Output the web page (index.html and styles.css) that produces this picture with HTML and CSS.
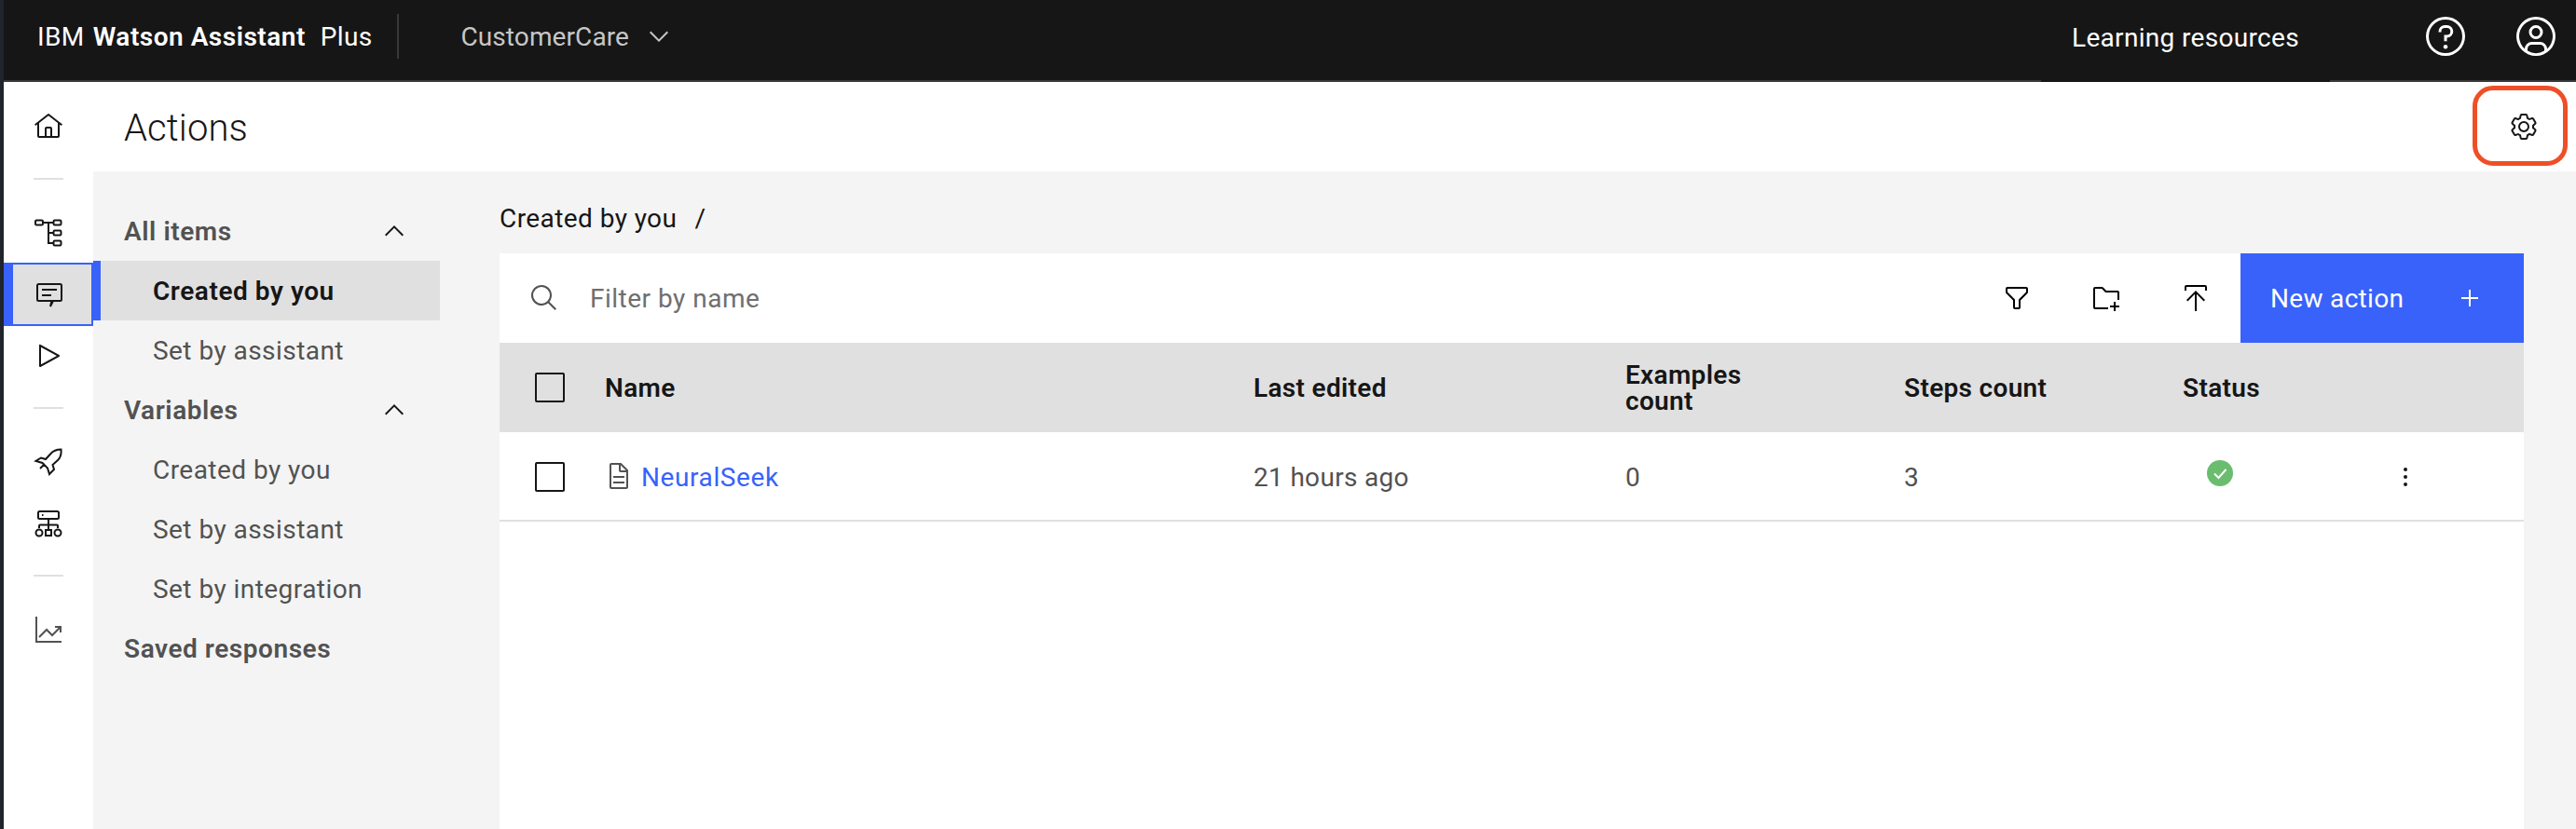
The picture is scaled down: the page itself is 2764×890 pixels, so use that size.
FILE: index.html
```html
<!DOCTYPE html>
<html lang="en">
<head>
<meta charset="utf-8">
<title>Actions</title>
<link rel="stylesheet" href="styles.css">
</head>
<body>
<div class="strip"></div>
<div class="app">
  <header class="topbar">
    <div class="brand"><span>IBM</span> <b>Watson Assistant</b></div>
    <div class="plan">Plus</div>
    <div class="workspace">CustomerCare
      <svg class="i32" viewBox="0 0 32 32"><path fill="#c6c6c6" d="M16 22L6 12l1.4-1.4 8.6 8.6 8.6-8.6L26 12z"/></svg>
    </div>
    <div class="learn">Learning resources</div>
    <svg class="i48" viewBox="0 0 32 32"><path d="M16,2A14,14,0,1,0,30,16,14,14,0,0,0,16,2Zm0,26A12,12,0,1,1,28,16,12,12,0,0,1,16,28Z"/><circle cx="16" cy="23.5" r="1.5"/><path d="M17,8H15.5A4.49,4.49,0,0,0,11,12.5V13h2v-.5A2.5,2.5,0,0,1,15.5,10H17a2.5,2.5,0,0,1,0,5H15v4.5h2V17a4.5,4.5,0,0,0,0-9Z"/></svg>
    <svg class="i48 user" viewBox="0 0 32 32"><path d="M16,8a5,5,0,1,0,5,5A5,5,0,0,0,16,8Zm0,8a3,3,0,1,1,3-3A3.0034,3.0034,0,0,1,16,16Z"/><path d="M16,2A14,14,0,1,0,30,16,14.0158,14.0158,0,0,0,16,2ZM10,26.3765V25a3.0033,3.0033,0,0,1,3-3h6a3.0033,3.0033,0,0,1,3,3v1.3765a11.8989,11.8989,0,0,1-12,0Zm13.9925-1.4507A5.0016,5.0016,0,0,0,19,20H13a5.0016,5.0016,0,0,0-4.9925,4.9258,12,12,0,1,1,15.985,0Z"/></svg>
  </header>
  <div class="body">
    <nav class="rail">
      <div class="rail-item"><svg class="i32" viewBox="0 0 32 32"><path fill="#161616" d="M16.6123,2.2138a1.01,1.01,0,0,0-1.2427,0L1,13.4194l1.2427,1.5717L4,13.6209V26a2.0041,2.0041,0,0,0,2,2H26a2.0037,2.0037,0,0,0,2-2V13.63L29.7573,15,31,13.4282ZM18,26H14V18h4Zm2,0V18a2.0023,2.0023,0,0,0-2-2H14a2.002,2.002,0,0,0-2,2v8H6V12.0615l10-7.79,10,7.8005V26Z"/></svg></div>
      <div class="rail-sep"></div>
      <div class="rail-item"><svg class="i32 line" viewBox="0 0 32 32"><rect x="2" y="2.5" width="8" height="5" rx="1.2"/><rect x="21.5" y="2.5" width="8" height="5" rx="1.2"/><rect x="21.5" y="13.5" width="8" height="5" rx="1.2"/><rect x="21.5" y="24.5" width="8" height="5" rx="1.2"/><path d="M10 5H21.5M16 5V27H21.5M16 16H21.5"/></svg></div>
      <div class="rail-item active"><svg class="i32 line" viewBox="0 0 32 32"><path d="M4.5 5H27.500A1.500 1.500 0 0 1 29 6.500V21.500A1.500 1.500 0 0 1 27.500 23H20L17 29L18.500 23H4.500A1.500 1.500 0 0 1 3 21.500V6.500A1.500 1.500 0 0 1 4.500 5ZM8 11H24M8 17H18"/></svg></div>
      <div class="rail-item"><svg class="i32" viewBox="0 0 32 32"><path fill="#161616" d="M7,28a1,1,0,0,1-1-1V5a1,1,0,0,1,1.4819-.8763l20,11a1,1,0,0,1,0,1.7525l-20,11A1.0005,1.0005,0,0,1,7,28ZM8,6.6909V25.3088L24.9248,16Z"/></svg></div>
      <div class="rail-sep"></div>
      <div class="rail-item"><svg class="i32 line" viewBox="0 0 32 32"><path d="M29.500 2.500C24 2.500 20.500 4.500 18 7.500L13 13L8 11.500L2.500 15L9.500 17L15 22.500L17 29L22 24L20.500 19L26 14C29 11 30 7 29.500 2.500ZM7 23L12 18"/></svg></div>
      <div class="rail-item second"><svg class="i32 line" viewBox="0 0 32 32"><rect x="5" y="3" width="22" height="8" rx="1.500"/><path d="M16 11V22M6 21V18.500A1 1 0 0 1 7 17.500H25A1 1 0 0 1 26 18.500V21"/><circle cx="6" cy="26" r="3.500"/><rect x="13" y="23" width="6" height="6"/><circle cx="26" cy="26" r="3.500"/><path d="M9 7H10.500"/></svg></div>
      <div class="rail-sep"></div>
      <div class="rail-item"><svg class="i32 line muted" viewBox="0 0 32 32"><path d="M3 2V29H30M6 24L14 16L20 22L29 13M23 13H29V19"/></svg></div>
    </nav>
    <div class="main">
      <div class="titlebar">
        <h1>Actions</h1>
        <svg class="i32 gear" viewBox="0 0 32 32"><path fill="#161616" d="M27,16.76c0-.25,0-.5,0-.76s0-.51,0-.77l1.92-1.68A2,2,0,0,0,29.3,11L26.94,7a2,2,0,0,0-1.73-1,2,2,0,0,0-.64.1l-2.43.82a11.35,11.35,0,0,0-1.31-.75l-.51-2.52a2,2,0,0,0-2-1.61H13.64a2,2,0,0,0-2,1.61l-.51,2.52a11.48,11.48,0,0,0-1.32.75L7.43,6.06A2,2,0,0,0,6.79,6,2,2,0,0,0,5.06,7L2.7,11a2,2,0,0,0,.41,2.51L5,15.24c0,.25,0,.5,0,.76s0,.51,0,.77L3.11,18.45A2,2,0,0,0,2.7,21L5.06,25a2,2,0,0,0,1.73,1,2,2,0,0,0,.64-.1l2.43-.82a11.35,11.35,0,0,0,1.31.75l.51,2.52a2,2,0,0,0,2,1.61h4.72a2,2,0,0,0,2-1.61l.51-2.52a11.48,11.48,0,0,0,1.32-.75l2.42.82a2,2,0,0,0,.64.1,2,2,0,0,0,1.73-1L29.3,21a2,2,0,0,0-.41-2.51ZM25.21,24l-3.43-1.16a8.86,8.86,0,0,1-2.71,1.57L18.36,28H13.64l-.71-3.55a9.36,9.36,0,0,1-2.7-1.57L6.79,24,4.43,20l2.72-2.4a8.9,8.9,0,0,1,0-3.13L4.43,12,6.79,8l3.43,1.16a8.86,8.86,0,0,1,2.71-1.57L13.64,4h4.72l.71,3.55a9.36,9.36,0,0,1,2.7,1.57L25.21,8,27.57,12l-2.72,2.4a8.9,8.9,0,0,1,0,3.13L27.57,20Z"/><path fill="#161616" d="M16,22a6,6,0,1,1,6-6A5.94,5.94,0,0,1,16,22Zm0-10a3.91,3.91,0,0,0-4,4,3.91,3.91,0,0,0,4,4,3.91,3.91,0,0,0,4-4A3.91,3.91,0,0,0,16,12Z"/></svg>
      </div>
      <div class="content">
        <aside class="sidenav">
          <div class="nav-head">All items<svg class="i32" viewBox="0 0 32 32"><path d="M16 10L26 20 24.6 21.4 16 12.8 7.4 21.4 6 20 16 10z"/></svg></div>
          <div class="nav-sub current">Created by you</div>
          <div class="nav-sub">Set by assistant</div>
          <div class="nav-head">Variables<svg class="i32" viewBox="0 0 32 32"><path d="M16 10L26 20 24.6 21.4 16 12.8 7.4 21.4 6 20 16 10z"/></svg></div>
          <div class="nav-sub">Created by you</div>
          <div class="nav-sub">Set by assistant</div>
          <div class="nav-sub">Set by integration</div>
          <div class="nav-head">Saved responses</div>
        </aside>
        <section class="panel">
          <div class="crumb"><span>Created by you</span><span>/</span></div>
          <div class="card">
            <div class="toolbar">
              <svg class="i32 search" viewBox="0 0 32 32"><path d="M29,27.5859l-7.5521-7.5521a11.0177,11.0177,0,1,0-1.4141,1.4141L27.5859,29ZM4,13a9,9,0,1,1,9,9A9.01,9.01,0,0,1,4,13Z"/></svg>
              <div class="filter">Filter by name</div>
              <div class="tool"><svg class="i32" viewBox="0 0 32 32"><path d="M18,28H14a2,2,0,0,1-2-2V18.41L4.59,11A2,2,0,0,1,4,9.59V6A2,2,0,0,1,6,4H26a2,2,0,0,1,2,2V9.59A2,2,0,0,1,27.41,11L20,18.41V26A2,2,0,0,1,18,28ZM6,6V9.59l8,8V26h4V17.59l8-8V6Z"/></svg></div>
              <div class="tool"><svg class="i32" viewBox="0 0 32 32"><path d="M26 20L24 20 24 24 20 24 20 26 24 26 24 30 26 30 26 26 30 26 30 24 26 24 26 20z"/><path d="M28,8H16L12.59,4.59A2,2,0,0,0,11.17,4H4A2,2,0,0,0,2,6V26a2,2,0,0,0,2,2H18V26H4V6h7.17l3.41,3.41L15.17,10H28v8h2V10A2,2,0,0,0,28,8Z"/></svg></div>
              <div class="tool"><svg class="i32" viewBox="0 0 32 32"><path d="M6 18L7.41 19.41 15 11.83 15 30 17 30 17 11.83 24.59 19.41 26 18 16 8 6 18z"/><path d="M6,8V4H26V8h2V4a2,2,0,0,0-2-2H6A2,2,0,0,0,4,4V8Z"/></svg></div>
              <div class="new-action"><span>New action</span><svg class="i32" viewBox="0 0 32 32"><path fill="#fff" d="M17 15V7H15V15H7V17H15V25H17V17H25V15Z"/></svg></div>
            </div>
            <div class="grid head">
              <div class="check-cell"><span class="check"></span></div>
              <div class="t">Name</div>
              <div class="t">Last edited</div>
              <div class="t wrap">Examples count</div>
              <div class="t">Steps count</div>
              <div class="t">Status</div>
              <div></div>
            </div>
            <div class="grid row">
              <div class="check-cell"><span class="check"></span></div>
              <div class="name-cell"><svg class="i32 doc" viewBox="0 0 32 32"><path d="M25.7,9.3l-7-7C18.5,2.1,18.3,2,18,2H8C6.9,2,6,2.9,6,4v24c0,1.1,0.9,2,2,2h16c1.1,0,2-0.9,2-2V10C26,9.7,25.9,9.5,25.7,9.3z M18,4.400l5.600,5.600H18V4.400z M24,28H8V4h8v6c0,1.100,0.900,2,2,2h6V28z"/><path d="M10 22H22V24H10z M10 16H22V18H10z"/></svg><span class="link">NeuralSeek</span></div>
              <div>21 hours ago</div>
              <div>0</div>
              <div>3</div>
              <div><svg class="status" viewBox="0 0 28 28"><circle cx="14" cy="14" r="14" fill="#6abd6e"/><path d="M8 14.500L12.500 19L20.500 10" fill="none" stroke="#fff" stroke-width="2"/></svg></div>
              <div class="kebab"><i></i><i></i><i></i></div>
            </div>
          </div>
        </section>
      </div>
    </div>
  </div>
</div>
<div class="callout"></div>
</body>
</html>
```
FILE: styles.css
```css
* { box-sizing: border-box; }
html, body { margin: 0; height: 890px; overflow: hidden; }
body {
  display: flex;
  position: relative;
  background: #fff;
  font-family: "Roboto", "Liberation Sans", sans-serif;
  font-size: 28px;
  letter-spacing: 0.32px;
  color: #161616;
}
.strip { width: 4px; background: #20242c; flex: none; }
.app { flex: 1; display: flex; flex-direction: column; min-width: 0; }
.i32 { width: 32px; height: 32px; flex: none; display: block; }
.i48 { width: 48px; height: 48px; flex: none; display: block; fill: #fff; margin-bottom: 8px; }
.user { margin-left: 49px; margin-right: 19px; }

.topbar {
  height: 88px; flex: none; display: flex; align-items: center;
  background: #161616; color: #fff; border-bottom: 2px solid #393939;
}
.brand { margin-left: 36px; margin-bottom: 8px; white-space: nowrap; }
.brand b { font-weight: 600; letter-spacing: 0.5px; margin-left: 2px; }
.plan { margin-left: 16px; margin-bottom: 8px; }
.workspace {
  margin-left: 27px; margin-bottom: 8px; padding-left: 66px; height: 48px;
  border-left: 2px solid #393939; color: #c6c6c6; letter-spacing: 0.1px;
  display: flex; align-items: center; gap: 16px;
}
.learn {
  margin-left: auto; margin-right: 100px; margin-bottom: -2px; width: 310px; height: 88px;
  padding-left: 33px; padding-bottom: 8px; background: #161616;
  display: flex; align-items: center; position: relative;
}

.body { flex: 1; display: flex; min-height: 0; }
.rail { width: 96px; flex: none; padding-top: 16px; background: #fff; position: relative; z-index: 1; }
.rail-item { height: 64px; display: flex; align-items: center; justify-content: center; }
.rail-item.active {
  height: 68px; background: #e0e0e0; border: 2px solid #3862fa; border-left-width: 10px; padding-right: 6px;
}
.rail-item.second { margin-top: 2px; }
.rail-sep { width: 32px; height: 2px; background: #e0e0e0; margin: 23px auto 25px; }
.line { fill: none; stroke: #161616; stroke-width: 2; }
.muted { stroke: #525252; }

.main { flex: 1; display: flex; flex-direction: column; min-width: 0; }
.titlebar {
  height: 96px; flex: none; display: flex; align-items: center; justify-content: space-between;
  padding: 0 40px 0 33px;
}
h1 { margin: 2px 0 0; font-size: 40px; font-weight: 300; letter-spacing: 0.1px; }
.content { flex: 1; display: flex; background: #f4f4f4; min-height: 0; }

.sidenav { width: 372px; flex: none; padding-top: 32px; color: #525252; letter-spacing: 0.45px; }
.nav-head {
  height: 64px; padding: 0 22px 0 33px; display: flex; align-items: center; justify-content: space-between;
  font-weight: 600; letter-spacing: 0.55px;
}
.nav-head .i32 { fill: #161616; margin-right: 11px; }
.nav-sub { height: 64px; padding-left: 64px; display: flex; align-items: center; }
.nav-sub.current { background: #e0e0e0; color: #161616; font-weight: 600; letter-spacing: 0.55px; border-left: 8px solid #3862fa; padding-left: 56px; }

.panel { flex: 1; display: flex; flex-direction: column; padding: 0 56px 0 64px; min-width: 0; }
.crumb { height: 88px; flex: none; padding-top: 33px; display: flex; gap: 19px; line-height: 36px; letter-spacing: 0.42px; }
.card { flex: 1; background: #fff; }
.toolbar { height: 96px; display: flex; align-items: center; padding-left: 32px; }
.search { fill: #525252; }
.filter { margin-left: 33px; margin-right: auto; color: #6f6f6f; letter-spacing: 0.5px; }
.tool { width: 96px; height: 96px; display: flex; align-items: center; justify-content: center; }
.new-action {
  width: 304px; height: 96px; background: #3862fa; color: #fff;
  display: flex; align-items: center; justify-content: space-between; padding: 0 42px 0 32px;
}
.grid { display: grid; grid-template-columns: 113px 696px 399px 299px 299px 239px 1fr; align-items: center; height: 96px; }
.head { background: #e0e0e0; font-weight: 600; line-height: 28px; }
.head .t { padding-top: 2px; }
.wrap { width: 200px; }
.row { border-bottom: 2px solid #e0e0e0; color: #525252; padding-top: 2px; }
.check-cell { padding-left: 38px; display: flex; }
.check { width: 32px; height: 32px; border: 2px solid #161616; border-radius: 2px; display: block; }
.name-cell { display: flex; align-items: center; gap: 8px; margin-left: -1px; }
.doc { fill: #525252; margin-top: -3px; }
.link { color: #3862fa; letter-spacing: 0.6px; }
.status { width: 28px; height: 28px; display: block; margin: -8px 0 0 26px; }
.kebab { display: flex; flex-direction: column; gap: 4px; width: 4px; margin-left: -2px; }
.kebab i { width: 4px; height: 4px; border-radius: 50%; background: #161616; display: block; }

.callout {
  position: absolute; left: 2653px; top: 92px; width: 102px; height: 86px;
  border: 5px solid #ee4f27; border-radius: 22px;
}
```
